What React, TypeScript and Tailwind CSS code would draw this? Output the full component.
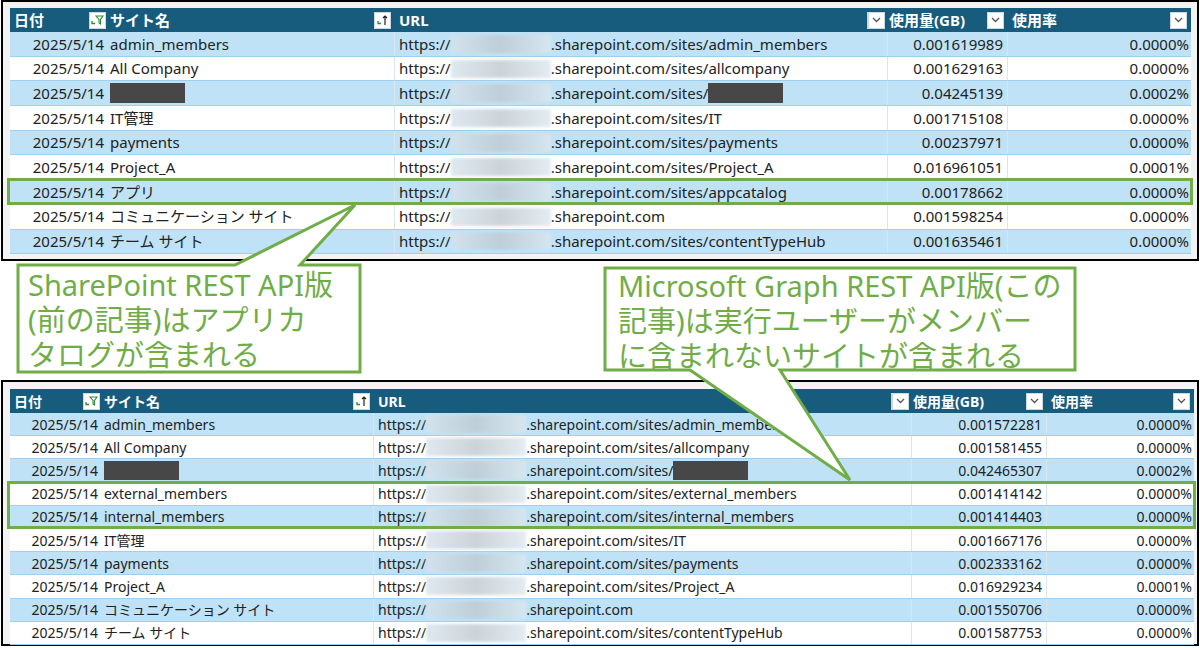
import React from 'react';

type Row = { site: string; redact?: boolean; path: string; gb: string; pct: string };

const topRows: Row[] = [
  { site: 'admin_members', path: '/sites/admin_members', gb: '0.001619989', pct: '0.0000%' },
  { site: 'All Company', path: '/sites/allcompany', gb: '0.001629163', pct: '0.0000%' },
  { site: '', redact: true, path: '/sites/', gb: '0.04245139', pct: '0.0002%' },
  { site: 'IT管理', path: '/sites/IT', gb: '0.001715108', pct: '0.0000%' },
  { site: 'payments', path: '/sites/payments', gb: '0.00237971', pct: '0.0000%' },
  { site: 'Project_A', path: '/sites/Project_A', gb: '0.016961051', pct: '0.0001%' },
  { site: 'アプリ', path: '/sites/appcatalog', gb: '0.00178662', pct: '0.0000%' },
  { site: 'コミュニケーション サイト', path: '', gb: '0.001598254', pct: '0.0000%' },
  { site: 'チーム サイト', path: '/sites/contentTypeHub', gb: '0.001635461', pct: '0.0000%' },
];

const bottomRows: Row[] = [
  { site: 'admin_members', path: '/sites/admin_members', gb: '0.001572281', pct: '0.0000%' },
  { site: 'All Company', path: '/sites/allcompany', gb: '0.001581455', pct: '0.0000%' },
  { site: '', redact: true, path: '/sites/', gb: '0.042465307', pct: '0.0002%' },
  { site: 'external_members', path: '/sites/external_members', gb: '0.001414142', pct: '0.0000%' },
  { site: 'internal_members', path: '/sites/internal_members', gb: '0.001414403', pct: '0.0000%' },
  { site: 'IT管理', path: '/sites/IT', gb: '0.001667176', pct: '0.0000%' },
  { site: 'payments', path: '/sites/payments', gb: '0.002333162', pct: '0.0000%' },
  { site: 'Project_A', path: '/sites/Project_A', gb: '0.016929234', pct: '0.0001%' },
  { site: 'コミュニケーション サイト', path: '', gb: '0.001550706', pct: '0.0000%' },
  { site: 'チーム サイト', path: '/sites/contentTypeHub', gb: '0.001587753', pct: '0.0000%' },
];

const font = { fontFamily: '"Noto Sans", "Noto Sans CJK JP", sans-serif' };

function Chevron() {
  return (
    <span className="flex h-[17px] w-[17px] items-center justify-center border border-gray-300 bg-white">
      <svg width="9" height="6" viewBox="0 0 9 6"><path d="M1 1l3.5 3.5L8 1" stroke="#555" strokeWidth="1.3" fill="none" /></svg>
    </span>
  );
}

function FilterIcon() {
  return (
    <span className="flex h-[17px] w-[17px] items-center justify-center border border-gray-300 bg-white">
      <svg width="13" height="11" viewBox="0 0 13 11">
        <path d="M1 6v2.5h3" stroke="#2e8b3a" strokeWidth="1.3" fill="none" />
        <path d="M5 1h7L9.5 4.5V9l-1.5-1V4.5z" stroke="#2e8b3a" strokeWidth="1.1" fill="none" />
      </svg>
    </span>
  );
}

function SortIcon() {
  return (
    <span className="flex h-[17px] w-[17px] items-center justify-center border border-gray-300 bg-white">
      <svg width="12" height="11" viewBox="0 0 12 11">
        <path d="M1 6v2.5h3" stroke="#2e8b3a" strokeWidth="1.3" fill="none" />
        <path d="M8 10V1M6 3l2-2 2 2" stroke="#222" strokeWidth="1.2" fill="none" />
      </svg>
    </span>
  );
}

function Blur() {
  return (
    <span className="inline-block h-[18px] w-[100px] bg-gradient-to-r from-[#d7e3ec] via-[#bfc9d0] to-[#dde8ef] opacity-80 blur-[1.5px]" />
  );
}

function Table({ rows, cols, rowH, text, highlight }: { rows: Row[]; cols: string; rowH: string; text: string; highlight: number[] }) {
  const renderRow = (r: Row, i: number) => (
    <div key={i} className={`grid ${cols} ${rowH} items-center border-b border-[#9fcfee] ${i % 2 === 0 ? 'bg-[#bfe2f6]' : 'bg-white'}`}>
      <div className="pr-1 text-right">2025/5/14</div>
      <div className="flex h-full items-center border-r border-[#d9e6ee] pl-0.5">
        {r.redact ? <span className="inline-block h-[85%] w-[75px] bg-[#474747]" /> : r.site}
      </div>
      <div className="flex h-full items-center border-r border-[#d9e6ee] pl-1">
        https://<Blur />.sharepoint.com{r.path}
        {r.redact && <span className="inline-block h-[85%] w-[75px] bg-[#474747]" />}
      </div>
      <div className="flex h-full items-center justify-end border-r border-[#d9e6ee] pr-1">{r.gb}</div>
      <div className="pr-0.5 text-right">{r.pct}</div>
    </div>
  );
  const out: React.ReactNode[] = [];
  for (let i = 0; i < rows.length; i++) {
    if (i === highlight[0]) {
      const group = highlight.map((h) => renderRow(rows[h], h));
      out.push(
        <div key={`h${i}`} className="relative">
          {group}
          <div className="pointer-events-none absolute -left-[3px] -right-[2px] -top-[2px] bottom-0 border-[3px] border-[#70ad47]" />
        </div>
      );
      i += highlight.length - 1;
    } else out.push(renderRow(rows[i], i));
  }
  return (
    <div className={`text-[#222] ${text}`} style={font}>
      <div className={`grid ${cols} h-[24px] items-center bg-[#175b7d] font-bold text-white`}>
        <div className="flex items-center justify-between pl-1 pr-0.5">日付<FilterIcon /></div>
        <div className="flex items-center justify-between pl-0.5 pr-1">サイト名<SortIcon /></div>
        <div className="flex items-center justify-between pl-1 pr-1">URL<Chevron /></div>
        <div className="flex items-center justify-between pl-0.5 pr-1"><span className="-ml-[22px] flex items-center gap-1"><Chevron />使用量(GB)</span><Chevron /></div>
        <div className="flex items-center justify-between pl-1 pr-1">使用率<Chevron /></div>
      </div>
      {out}
    </div>
  );
}

export default function App() {
  return (
    <div className="relative h-[648px] w-[1200px] overflow-hidden bg-white">
      <div className="ml-[1px] h-[261px] w-[1198px] border-2 border-black bg-[#f3f3f3] pl-[7px] pr-[6px] pt-[6px]">
        <Table rows={topRows} cols="grid-cols-[98px_287px_493px_120px_1fr]" rowH="h-[24.7px]" text="text-[15px]" highlight={[6]} />
      </div>
      <div className="mt-[119px] ml-[1px] h-[266px] w-[1198px] border-2 border-black bg-[#f3f3f3] pl-[7px] pr-[3px] pt-[7px]">
        <Table rows={bottomRows} cols="grid-cols-[92px_272px_538px_135px_1fr]" rowH="h-[23.2px]" text="text-[14px]" highlight={[3, 4]} />
      </div>

      <svg className="pointer-events-none absolute left-0 top-0" width="1200" height="648">
        <path d="M18 265 H235 L355 205 L300 265 H360 V372 H18 Z" fill="white" stroke="#70ad47" strokeWidth="3" />
        <path d="M605 268 H1075 V370 H780 L850 480 L690 370 H605 Z" fill="white" stroke="#70ad47" strokeWidth="3" />
      </svg>
      <div className="absolute left-[28px] top-[267px] text-[29px] leading-[35px] text-[#70ad47]" style={font}>
        SharePoint REST API版<br />(前の記事)はアプリカ<br />タログが含まれる
      </div>
      <div className="absolute left-[618px] top-[268px] text-[29px] leading-[35px] text-[#70ad47]" style={font}>
        Microsoft Graph REST API版(この<br />記事)は実行ユーザーがメンバー<br />に含まれないサイトが含まれる
      </div>
    </div>
  );
}
